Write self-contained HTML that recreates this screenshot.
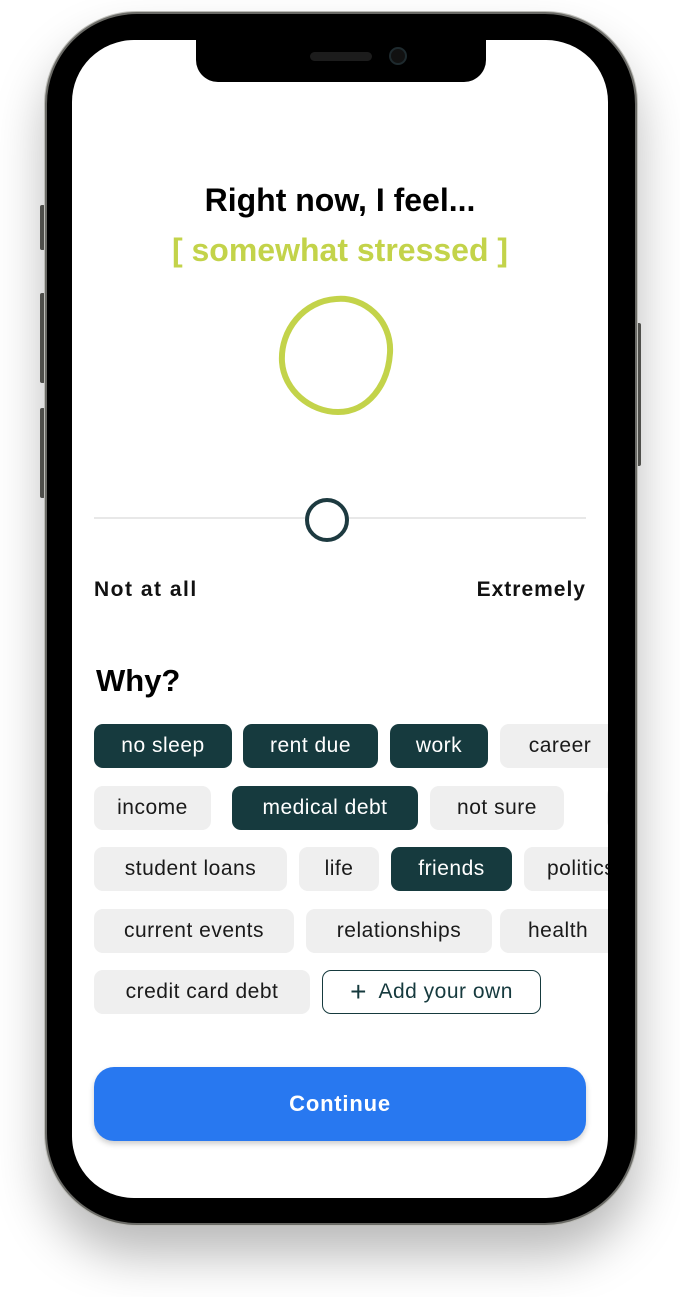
<!DOCTYPE html>
<html><head><meta charset="utf-8"><style>
*{margin:0;padding:0;box-sizing:border-box}
html,body{width:680px;height:1297px;background:#fff;overflow:hidden;font-family:"Liberation Sans",Arial,sans-serif}
.phone{position:absolute;left:45px;top:12px;width:592px;height:1213px;border-radius:92px;background:#000;border:2px solid #6a6a66;box-shadow:0 0 0 1px #bdbdb8,0 30px 50px rgba(0,0,0,.28)}
.btn{position:absolute;background:#5a5a56;width:5px;border-radius:2px}
.screen{position:absolute;left:72px;top:40px;width:536px;height:1158px;border-radius:62px;background:#fff;overflow:hidden}
.notch{position:absolute;left:124px;top:0;width:290px;height:42px;background:#000;border-radius:0 0 22px 22px}
.spk{position:absolute;left:114px;top:12px;width:62px;height:9px;border-radius:5px;background:#1c1c1c}
.cam{position:absolute;left:193px;top:7px;width:18px;height:18px;border-radius:50%;background:#111;border:2px solid #1e2a2e}
.abs{position:absolute}
.h1{left:0;width:536px;text-align:center;top:142px;font-size:32px;font-weight:bold;color:#000}
.h2{left:0;width:536px;text-align:center;top:192px;font-size:32px;font-weight:bold;color:#c3d34a}
.chip{position:absolute;height:44px;border-radius:9px;background:#efefef;color:#1a1a1a;font-size:21px;letter-spacing:.5px;line-height:44px;text-align:center;white-space:nowrap;overflow:hidden}
.on{background:#163a3e;color:#fff}
</style></head><body>
<div class="btn" style="left:40px;top:205px;height:45px"></div>
<div class="btn" style="left:40px;top:293px;height:90px"></div>
<div class="btn" style="left:40px;top:408px;height:90px"></div>
<div class="btn" style="left:636px;top:323px;height:143px"></div>
<div class="phone"></div>
<div class="screen">
 <div class="notch"><div class="spk"></div><div class="cam"></div></div>
 <div class="abs h1">Right now, I feel...</div>
 <div class="abs h2">[ somewhat stressed ]</div>
 <svg class="abs" style="left:200px;top:250px" width="130" height="130" viewBox="0 0 130 130"><path d="M64 9 C92 6 120 30 118 63 C116 95 96 122 66 122 C38 122 12 100 10 72 C8 40 32 11 64 9 Z" fill="none" stroke="#c3d34a" stroke-width="6"/></svg>
 <div class="abs" style="left:22px;top:477px;width:492px;height:2px;background:#e8e8e8"></div>
 <div class="abs" style="left:233px;top:458px;width:44px;height:44px;border-radius:50%;border:4px solid #1d3a40;background:#fff"></div>
 <div class="abs" style="left:22px;top:538px;font-size:21px;letter-spacing:1.5px;font-weight:bold;color:#111">Not at all</div>
 <div class="abs" style="right:22px;top:538px;font-size:21px;letter-spacing:1px;font-weight:bold;color:#111">Extremely</div>
 <div class="abs" style="left:24px;top:623px;font-size:31px;font-weight:bold;color:#000">Why?</div>

 <div class="chip on" style="left:22px;top:684px;width:138px">no sleep</div>
 <div class="chip on" style="left:171px;top:684px;width:135px">rent due</div>
 <div class="chip on" style="left:318px;top:684px;width:98px">work</div>
 <div class="chip" style="left:428px;top:684px;width:120px">career</div>

 <div class="chip" style="left:22px;top:746px;width:117px">income</div>
 <div class="chip on" style="left:160px;top:746px;width:186px">medical debt</div>
 <div class="chip" style="left:358px;top:746px;width:134px">not sure</div>
 <div class="chip" style="left:535px;top:746px;width:80px"></div>

 <div class="chip" style="left:22px;top:807px;width:193px">student loans</div>
 <div class="chip" style="left:227px;top:807px;width:80px">life</div>
 <div class="chip on" style="left:319px;top:807px;width:121px">friends</div>
 <div class="chip" style="left:452px;top:807px;width:120px;text-align:left;padding-left:23px">politics</div>

 <div class="chip" style="left:22px;top:869px;width:200px">current events</div>
 <div class="chip" style="left:234px;top:869px;width:186px">relationships</div>
 <div class="chip" style="left:428px;top:869px;width:120px;text-align:left;padding-left:28px">health</div>

 <div class="chip" style="left:22px;top:930px;width:216px">credit card debt</div>
 <div class="chip" style="left:250px;top:930px;width:219px;background:#fff;border:1.5px solid #163a3e;line-height:41px;color:#163a3e">
  <span style="font-size:28px;vertical-align:-3px;font-weight:300">+</span>&nbsp; Add your own</div>

 <div class="abs" style="left:22px;top:1027px;width:492px;height:74px;border-radius:20px;background:#2878f0;color:#fff;font-size:22px;letter-spacing:.8px;font-weight:bold;text-align:center;line-height:74px;box-shadow:0 3px 6px rgba(0,0,0,.2)">Continue</div>
</div>
</body></html>
